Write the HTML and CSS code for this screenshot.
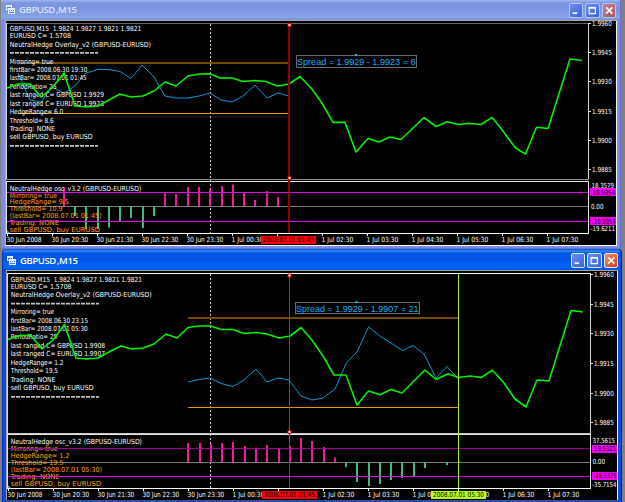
FILE: index.html
```html
<!DOCTYPE html>
<html lang="en">
<head>
<meta charset="utf-8">
<title>GBPUSD,M15</title>
<link rel="stylesheet" href="styles.css">
</head>
<body>
<main class="desktop">
  <section class="window inactive">
    <header class="titlebar">
      <svg class="app-icon" viewBox="0 0 10 10"><path class="ic-a" d="M0 0h6v5H0z"/><path class="ic-b" d="M1 2h4v2H1z"/><path class="ic-a" d="M2 3h7v6H2z"/><path class="ic-b" d="M3 5h1v1H3zM5 5h1v1H5zM7 5h1v1H7zM3 7h5v1H3z"/></svg>
      <h1 class="title">GBPUSD ,M15</h1>
      <div class="buttons">
        <button class="btn" aria-label="Minimize"><svg viewBox="0 0 14 14"><path d="M3 10h5" stroke-width="2"/></svg></button>
        <button class="btn" aria-label="Maximize"><svg viewBox="0 0 14 14"><path d="M3.5 4v6.5h7V4" stroke-width="1.2"/><path d="M3 4h8" stroke-width="2"/></svg></button>
        <button class="btn close" aria-label="Close"><svg viewBox="0 0 14 14"><path d="M3.5 3.5l7 7M10.5 3.5l-7 7" stroke-width="1.8"/></svg></button>
      </div>
    </header>
    <svg class="chart" id="chart-a" viewBox="5 20 612 226" width="612" height="226"></svg>
  </section>
  <section class="window active">
    <header class="titlebar">
      <svg class="app-icon" viewBox="0 0 10 10"><path class="ic-a" d="M0 0h6v5H0z"/><path class="ic-b" d="M1 2h4v2H1z"/><path class="ic-a" d="M2 3h7v6H2z"/><path class="ic-b" d="M3 5h1v1H3zM5 5h1v1H5zM7 5h1v1H7zM3 7h5v1H3z"/></svg>
      <h1 class="title">GBPUSD ,M15</h1>
      <div class="buttons">
        <button class="btn" aria-label="Minimize"><svg viewBox="0 0 14 14"><path d="M3 10h5" stroke-width="2"/></svg></button>
        <button class="btn" aria-label="Maximize"><svg viewBox="0 0 14 14"><path d="M3.5 4v6.5h7V4" stroke-width="1.2"/><path d="M3 4h8" stroke-width="2"/></svg></button>
        <button class="btn close" aria-label="Close"><svg viewBox="0 0 14 14"><path d="M3.5 3.5l7 7M10.5 3.5l-7 7" stroke-width="1.8"/></svg></button>
      </div>
    </header>
    <svg class="chart" id="chart-b" viewBox="6 270 612 231" width="612" height="231"></svg>
  </section>
</main>
<script src="chart.js"></script>
</body>
</html>
```
FILE: styles.css
```css
* { box-sizing: border-box; }

body {
  margin: 0;
  overflow: hidden;
  font-family: "DejaVu Sans Condensed", "DejaVu Sans", sans-serif;
}

.desktop {
  position: relative;
  width: 625px;
  height: 502px;
  overflow: hidden;
  background: #808080;
}

.window {
  position: absolute;
  display: flex;
  flex-direction: column;
}

.inactive {
  left: 1px;
  top: 0;
  width: 620px;
  height: 249px;
  padding: 0 4px;
  background: #7b8ce2;
  border-bottom: 1px solid #6878cc;
  border-right: 1px solid #6470c8;
}

.active {
  left: 2px;
  top: 249px;
  width: 620px;
  height: 253px;
  padding: 0 4px 0 3px;
  background: #0a4be0;
  border-right: 1px solid #001a9c;
  border-left: 1px solid #0831c9;
  border-radius: 4px 4px 0 0;
}

.titlebar {
  display: flex;
  align-items: center;
  flex: none;
  height: 20px;
  margin: 0 -3px;
  padding-left: 4px;
}

.inactive .titlebar {
  margin: 0 -4px;
  padding-left: 5px;
  background: linear-gradient(#a1b8ef 0, #7a94e0 3px, #7c96e0 11px, #83a6ea 17px, #7791d8 20px);
}

.active .titlebar {
  height: 21px;
  padding: 2px 0 0 4px;
  border-radius: 4px 4px 0 0;
  background: linear-gradient(#0a4ad0 0, #2f8cff 2px, #0358e4 4px, #0055e5 11px, #0268ff 18px, #0050d8 21px);
}

.app-icon { width: 10px; height: 10px; flex: none; }
.ic-a { fill: #e4f0ff; }
.ic-b { fill: #4577ce; }

.title {
  flex: 1;
  margin: 0 0 0 3px;
  font: 600 9.5px/14px "Open Sans", "DejaVu Sans", sans-serif;
  color: #dce6fa;
  letter-spacing: -0.38px;
  word-spacing: -1.2px;
  white-space: nowrap;
}

.active .title { color: #fff; }

.buttons { display: flex; gap: 2px; padding-right: 4px; }
.active .buttons { padding-right: 2px; }

.btn {
  width: 14.5px;
  height: 15px;
  padding: 0;
  border: 1px solid #b4c6f4;
  border-radius: 2px;
  background: linear-gradient(135deg, #6b8cf0, #3864e0);
  display: flex;
}

.btn svg { width: 100%; height: 100%; fill: none; stroke: #fff; }
.btn.close { background: linear-gradient(135deg, #c48090, #a85564); }
.active .btn { border-color: #dbe6ff; }
.active .btn.close { background: linear-gradient(135deg, #f08c68, #d8401c); }

.chart { display: block; flex: none; }
.chart text { font-size: 7px; fill: #fff; white-space: pre; }
.chart .orange { fill: #ffa210; }
.chart .dark { fill: #000; }
.chart .spread { font-family: "Liberation Sans", Arial, sans-serif; font-size: 9.8px; fill: #14b0f4; }
```
FILE: chart.js
```js
const NS = "http://www.w3.org/2000/svg";

function add(svg, tag, attrs, text) {
  const el = document.createElementNS(NS, tag);
  for (const key in attrs) el.setAttribute(key, attrs[key]);
  if (text) el.textContent = text;
  svg.appendChild(el);
}

function draw(id, c) {
  const svg = document.getElementById(id);
  const rect = (x, y, width, height, fill, extra) =>
    add(svg, "rect", Object.assign({ x, y, width, height, fill }, extra));
  const label = (s, x, y, x2, cls) =>
    add(svg, "text", { x, y, textLength: x2 - x, lengthAdjust: "spacingAndGlyphs", class: cls || "" }, s);
  const line = (points, stroke, w) =>
    add(svg, "polyline", { points, stroke, "stroke-width": w, fill: "none", "stroke-linejoin": "round" });

  const L = c.left, R = c.axis, T = c.top, B = c.bottom;
  rect(L - 2, T - 3, 614, 232, "#000");
  rect(L - 2, T - 3, 614, 1, "#aca899");
  rect(L - 2, T - 3, 1, 232, "#aca899");
  rect(c.edge, T - 2, 1, 230, "#f4f2ea");
  rect(L - 2, c.foot, 614, 1, c.footColor);

  rect(L, T, R - L, 1, c.frame);
  rect(L - 1, T, 1, c.sep - T, "#d8d8d8");
  rect(R, T, 1, c.sep - T, "#d8d8d8");
  rect(L - 1, c.sep, R - L + 2, 1, c.sepColor);
  rect(L - 1, c.sub, R - L + 2, 1, "#e4e4e4");
  rect(L - 1, c.sub, 1, B - c.sub, "#e4e4e4");
  rect(R, c.sub, 1, B - c.sub, "#e4e4e4");
  rect(L - 1, B, R - L + 2, 1, "#fff");
  add(svg, "line", { x1: c.day, x2: c.day, y1: T + 1, y2: B, stroke: "#c8c8c8", "stroke-width": 1, "stroke-dasharray": "2 2" });

  rect(c.rangeX, c.high, c.rangeEnd - c.rangeX, 2, "#754900");
  rect(c.rangeX, c.low, c.rangeEnd - c.rangeX, 1, "#e6920a");
  line(c.blue, "#0a9ad8", 1);

  rect(L, c.zero, R - L, 1, "#7c7c7c");
  c.bars.forEach(([x, y]) =>
    rect(Math.round(x) - 1, Math.min(y, c.zero), 2, Math.abs(y - c.zero), y < c.zero ? "#f0189c" : "#3cbc78"));

  c.comments.forEach(([s, y, x2]) => label(s, L + 2.7, y, x2));
  c.rules.forEach(y => add(svg, "line", { x1: L + 3, x2: L + 91, y1: y, y2: y, stroke: "#c0c0c0", "stroke-width": 1.7, "stroke-dasharray": "4 1" }));
  c.notes.forEach(([s, y, x2], i) => label(s, L + 2.7, y, x2, i ? "orange" : ""));
  rect(L, c.levels[0], R - L, 1, c.levelColor);
  rect(L, c.levels[1], R - L, 1, "#e800e8");
  line(c.green, "#00f400", 1.6);

  rect(c.red[0], T + 1, c.red[1], B - T - 1, c.red[2]);
  c.handles.forEach(y => rect(288, y - 1.5, 3, 3, "#fff", { stroke: "#f00000" }));
  if (c.cursor) rect(c.cursor, T, 1, B - T, "#b4f428");

  rect(c.box[0], c.box[1], c.box[2], c.box[3], "#000", { stroke: "#626c78" });
  rect(c.dot[0], c.dot[1], 2, 2, "#20b8f0");
  label(c.spread[0], c.spread[1], c.spread[2], c.spread[3], "spread");

  c.prices.forEach((y, i) => {
    label(["1.9960", "1.9945", "1.9930", "1.9915", "1.9900", "1.9885"][i], R + 4, y + 2.6, R + 23.8);
    rect(R + 1, Math.floor(y), 2, 1, "#ddd");
  });
  c.scale.forEach(([s, y, x, x2, hot]) => {
    if (hot) rect(R + 2, Math.round(y - 4), c.edge - R - 2, 8, "#f800f8");
    label(s, x, y + 2.6, x2, hot ? "dark" : "");
  });
  add(svg, "path", { d: `M${L} ${B}v-3l3 3z`, fill: "#7890b0" });

  const times = ["30 Jun 2008", "30 Jun 20:30", "30 Jun 21:30", "30 Jun 22:30", "30 Jun 23:30", "1 Jul 00:30", "", "1 Jul 02:30", "1 Jul 03:30", "1 Jul 04:30", "1 Jul 05:30", "1 Jul 06:30", "1 Jul 07:30"];
  times.forEach((s, i) => {
    const x = L + 45 * i;
    rect(x, B + 1, 1, 2, "#fff");
    if (s) label(s, x - 0.5, B + 8.6, x + (i === 0 ? 34.5 : i < 5 ? 36.3 : 31.3));
  });
  c.stamps.forEach(([s, x, fill]) => {
    rect(x, B + 3, 55, 8, fill);
    label(s, x + 2, B + 8.9, x + 53, "dark");
  });
}

draw("chart-a", {
  left: 7, axis: 588, top: 23, bottom: 233, sep: 179, sub: 181, edge: 616, foot: 245,
  frame: "#666", sepColor: "#8c8c8c", footColor: "#fff",
  day: 210.5, rangeX: 18, rangeEnd: 289, high: 62, low: 113, zero: 206,
  levels: [192, 221], levelColor: "#e800e8",
  red: [288, 2, "#8e0000"], handles: [25, 178],
  green: "7,88 18,84 30,84 41,97 52,88 64,73 75,106 86,107 98,106 109,100 120,94 131,97 143,96 154,91 165,82 176,86 188,76 199,74 210,73.7 220,78 232,78 243,81.5 255,80.5 266,81.5 277,86 289,84 300,76.5 311,88 322,103 333,122.4 345,122.4 356,152 368,138.5 379,142 390,137 401,139.5 424,117.5 436,126.5 447,121.7 458,124.5 469,123.2 481,124.5 492,117.3 503,131 515,147.5 525.5,154 536.5,127.3 548,128.5 570,59 582,60.5",
  blue: "18,73 30,100 41,102 52,87 64,93 75,86 86,73 98,69.5 109,69.5 120,71.5 131,78.5 142,65 154,77 165,96 176,98 188,98 199,96 210,93 221,100 232,102 243,96 255,85 267,98 278,93 289,96",
  bars: [[64, 187], [165, 193], [176, 194], [188, 187], [199, 187], [210, 189], [221.5, 186], [232.5, 184.5], [244, 193], [255, 200], [266.5, 191], [278, 197], [289, 194], [75, 216], [86, 229], [97.5, 229], [109, 227.5], [120, 221], [131, 218], [142.5, 228], [154, 216]],
  comments: [["GBPUSD,M15  1.9824 1.9827 1.9821 1.9821", 31, 141.3], ["EURUSD C= 1.5708", 38, 71], ["NeutralHedge Overlay_v2 (GBPUSD-EURUSD)", 46.5, 151], ["Mirroring= true", 63.5, 53.3], ["firstBar= 2008.06.30 19:30", 72, 87.3], ["lastBar= 2008.07.01 01:45", 80.3, 86.7], ["PeriodRatio= 25", 88.7, 56.7], ["last ranged C= GBPUSD 1.9929", 97.3, 104], ["last ranged C= EURUSD 1.9923", 105.6, 104], ["HedgeRange= 6.0", 114.2, 63.3], ["Threshold= 8.6", 122.6, 53.7], ["Trading: NONE", 131, 55], ["sell GBPUSD, buy EURUSD", 139.3, 92.7]],
  rules: [52.8, 145.8],
  notes: [["NeutralHedge osc_v3.2 (GBPUSD-EURUSD)", 190.8, 141.3], ["Mirroring= true", 197.5, 57], ["HedgeRange= 9.5", 204.4, 69], ["Threshold= 10.9", 211.3, 62.7], ["(lastBar= 2008.07.01 01:45)", 218.3, 101.7], ["Trading: NONE", 225.3, 59], ["sell GBPUSD, buy EURUSD", 232.2, 100]],
  box: [296.5, 55.5, 120, 12], dot: [355, 54], spread: ["Spread = 1.9929 - 1.9923 = 6", 297, 65, 415.5],
  prices: [23.7, 52.5, 81.5, 111, 140, 169.5],
  scale: [["18.3579", 185.8, 591.5, 614], ["10.9354", 192.2, 592.5, 615, 1], ["0.00", 206, 591, 603.5], ["-10.9354", 221, 592, 615.5, 1], ["-19.6211", 228.8, 590.5, 615]],
  stamps: [["2008.07.01 01:45", 261, "#f00"]]
});

draw("chart-b", {
  left: 8, axis: 590, top: 273, bottom: 488, sep: 433, sub: 434, edge: 617, foot: 500,
  frame: "#fff", sepColor: "#c8c8c8", footColor: "#555",
  day: 210.5, rangeX: 188, rangeEnd: 458.5, high: 317, low: 407, zero: 462,
  levels: [448, 476], levelColor: "#9c009c",
  red: [289, 1, "#f01414"], handles: [275.5, 432], cursor: 458,
  green: "8,339.5 20,335.5 31,335.5 42,349 53,340 64.5,324.5 76,358 87,359 98,358 109,352 121,346 132,349 143,348 154,344 166,334 177,338 188,327.5 199,326 210.5,326 221,329.5 233,329.5 244,333.5 256,332.5 267,334 279,338 290,336 301,327.5 312,340 323,356 334,375 346,375 357,405 368.5,391 380,394.7 391,389.5 402,393 425,370 436,379.5 448,373.7 459,377.5 470,376 481,377.5 492.5,370.3 504,383 515,399 526,407 537,380 549,381 571,310.5 583,312",
  blue: "188,382 199,379.5 210,378 221,383.5 233,386.5 244,380 256,369 267,382 278,378 289,380 301,396 312,400 323,398 335,389 346,363.5 357,352 368.5,327 380,336 391,343 402.5,350.5 413,345.5 424,354 436,378 447,366.5 458,379",
  bars: [[188, 443], [200, 443], [211, 444], [222, 443], [233, 442], [244.5, 446], [256, 449], [267, 445], [278.5, 448], [290, 446], [301, 438], [312, 441], [323.5, 447], [334.5, 457.5], [346, 467], [357, 482], [368.5, 486], [379.5, 484], [391, 480], [402, 478], [413.5, 476], [424.5, 468], [436, 463], [447, 465], [458.5, 461]],
  comments: [["GBPUSD,M15  1.9824 1.9827 1.9821 1.9821", 281.7, 142], ["EURUSD C= 1.5708", 289, 71.5], ["NeutralHedge Overlay_v2 (GBPUSD-EURUSD)", 297.3, 151.7], ["Mirroring= true", 314.3, 54], ["firstBar= 2008.06.30 23:15", 322.7, 88], ["lastBar= 2008.07.01 05:30", 331, 87.7], ["PeriodRatio= 25", 339.3, 57.3], ["last ranged C= GBPUSD 1.9908", 348, 105], ["last ranged C= EURUSD 1.9907", 356.3, 105], ["HedgeRange= 1.2", 364.7, 63.5], ["Threshold= 19.5", 373, 58], ["Trading: NONE", 381.7, 55.7], ["sell GBPUSD, buy EURUSD", 390, 93.5]],
  rules: [303.7, 396.8],
  notes: [["NeutralHedge osc_v3.2 (GBPUSD-EURUSD)", 444.3, 142], ["Mirroring= true", 450.8, 57.7], ["HedgeRange= 1.2", 458, 69.5], ["Threshold= 19.5", 465, 63.5], ["(lastBar= 2008.07.01 05:30)", 472.2, 102], ["Trading: NONE", 479, 59.7], ["sell GBPUSD, buy EURUSD", 486, 101]],
  box: [295.5, 302.5, 124, 11], dot: [355.5, 301], spread: ["Spread = 1.9929 - 1.9907 = 21", 296, 311.5, 418.5],
  prices: [274.5, 304, 333.5, 363, 393, 422.5],
  scale: [["37.5615", 440, 592.5, 615], ["19.5325", 448.6, 594, 616, 1], ["0.00", 461.7, 592.5, 605], ["-19.5325", 475.8, 593.5, 616.5, 1], ["-35.7154", 484, 592, 616.5]],
  stamps: [["2008.07.01 01:45", 262, "#f00"], ["2008.07.01 05:30", 431, "#b4ff1e"]]
});
```
